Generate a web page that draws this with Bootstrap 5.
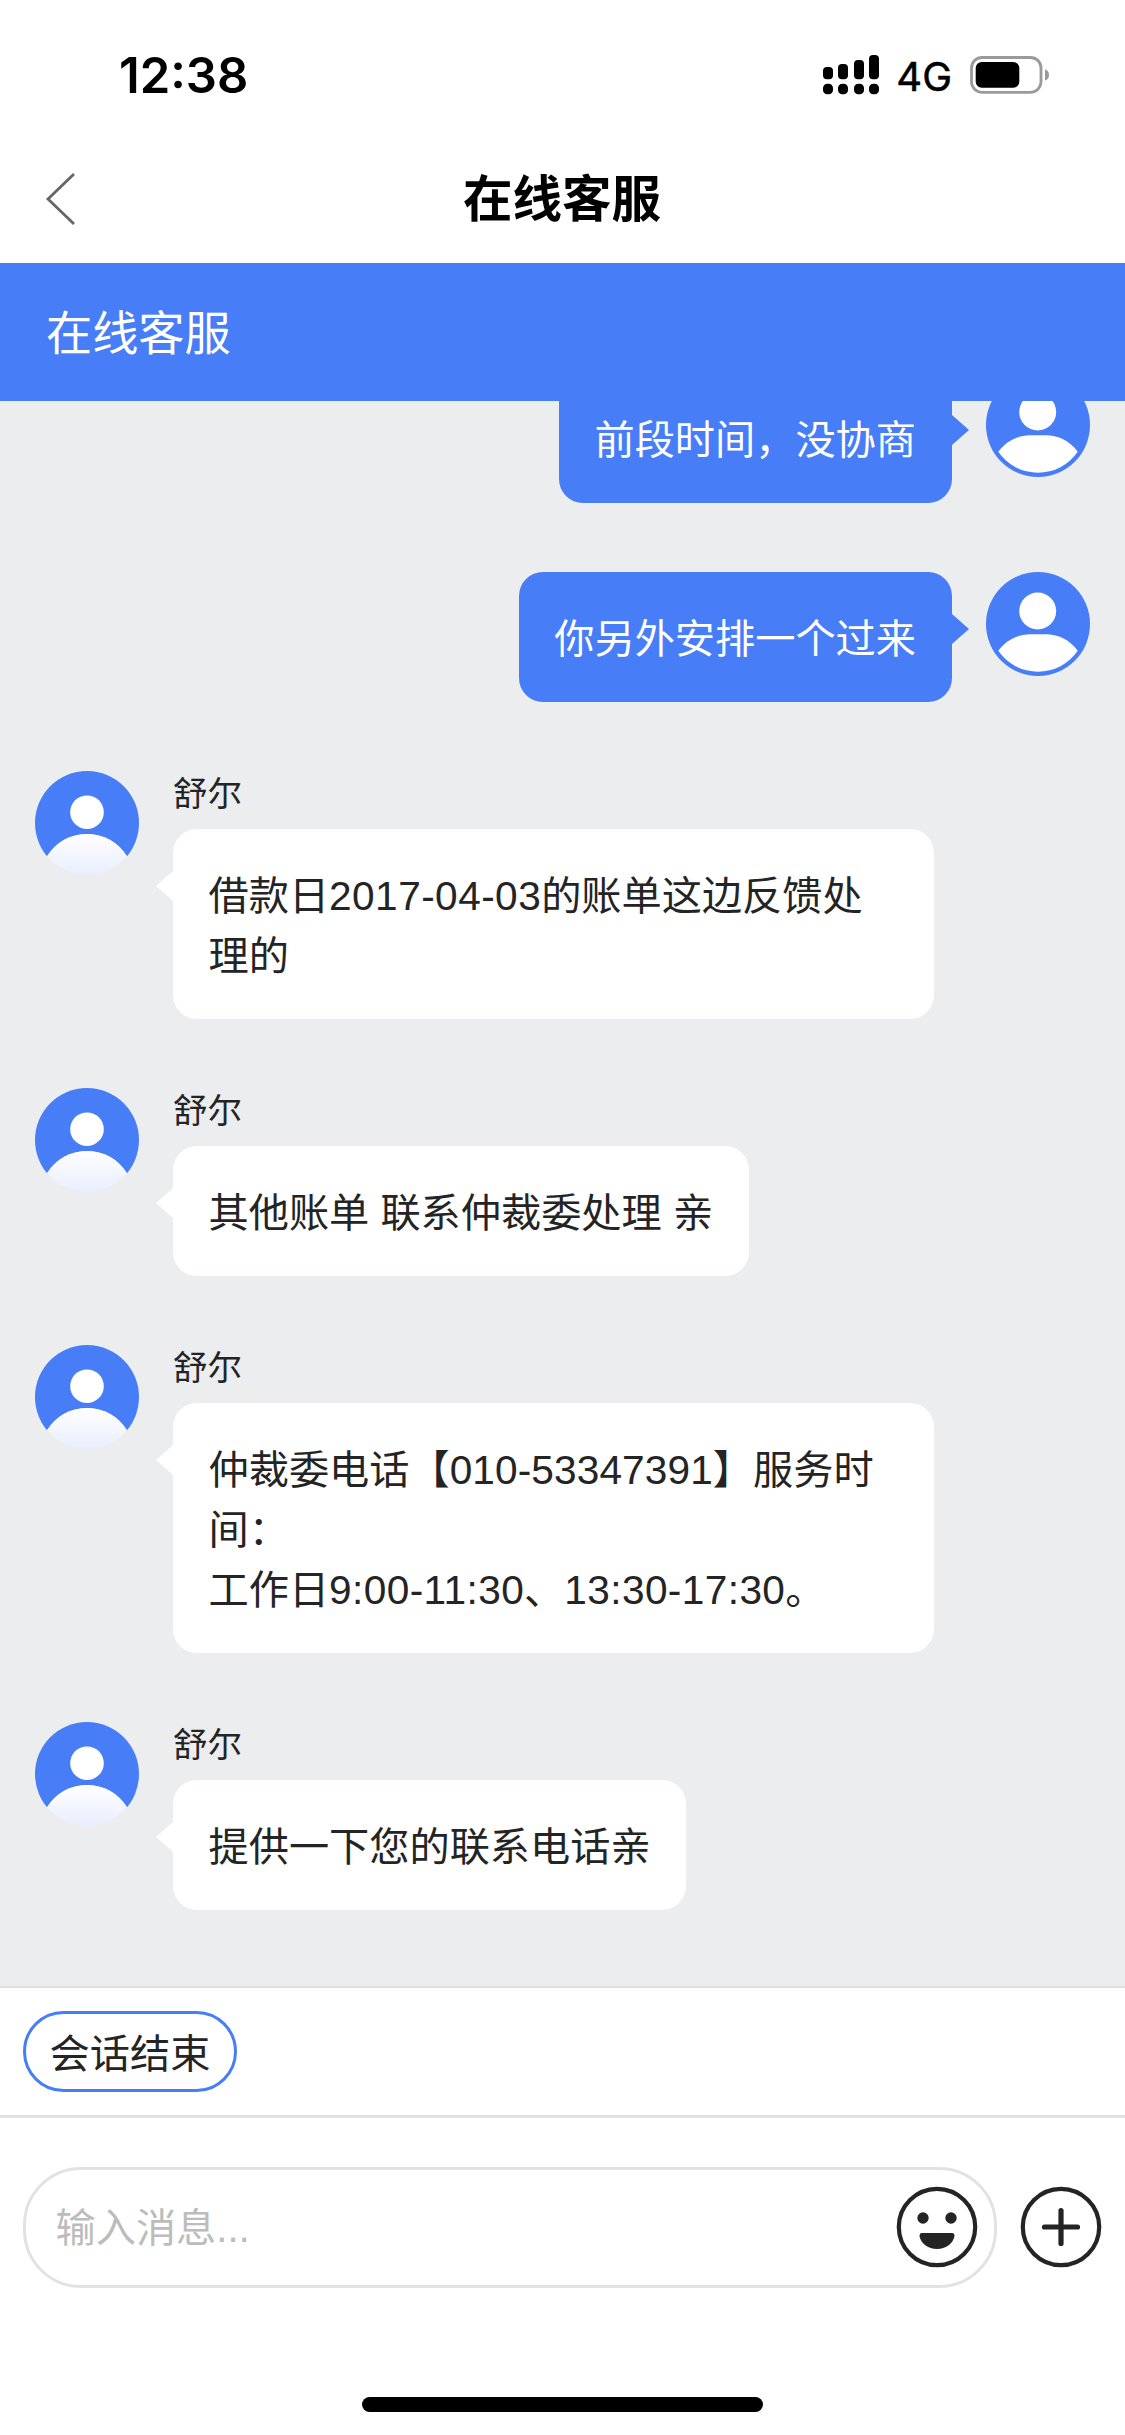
<!DOCTYPE html>
<html lang="zh-CN">
<head>
<meta charset="utf-8">
<meta name="viewport" content="width=device-width, initial-scale=1">
<title>在线客服</title>
<link href="https://cdn.jsdelivr.net/npm/bootstrap@5.3.0/dist/css/bootstrap.min.css" rel="stylesheet">
<style>
  :root { --brand: #477df6; --ink: #242424; --line: #e2e2e2; }
  body { font-family: "Liberation Sans", "Noto Sans CJK SC", sans-serif; color: var(--ink); }
  .screen { width: 1125px; height: 2435px; font-size: 40.2px; line-height: 60px; }
  svg { display: block; flex-shrink: 0; }

  .status-bar { height: 150px; padding: 0 75px 0 119px; font-family: Inter, sans-serif; color: #000; }
  .clock { font-size: 49px; font-weight: 600; padding-top: 2px; }
  .carrier { font-size: 40px; font-weight: 400; margin: 3px 18px 0 17.5px; -webkit-text-stroke: .5px #000; }
  .title-bar { height: 113px; padding: 0 45px 13px 44px; }
  .title-bar .page-title { font-size: 49.5px; font-weight: 700; color: #000; }
  .title-side { width: 32px; }
  .service-bar { height: 138px; padding: 3px 46px 0; background: var(--brand); font-size: 46.2px; }

  .chat { background: #ecedef; padding: 0 35px 76px 34.5px; gap: 69.1px; min-height: 0; }
  .msg { gap: 34.5px; }
  .sender { font-size: 34.6px; line-height: 47px; height: 58px; }
  .bubble { padding: 38px 35.5px 32px; border-radius: 24px; max-width: 761px; white-space: nowrap; }
  .bubble-wide { width: 761px; }
  .bubble-in { background: #fff; }
  .bubble-out { background: var(--brand); }
  .bubble::after { content: ""; position: absolute; top: 42px; border: 15px solid transparent; }
  .bubble-in::after { right: 100%; border-left-width: 0; border-right: 17px solid #fff; }
  .bubble-out::after { left: 100%; border-right-width: 0; border-left: 17px solid var(--brand); }
  .digits { font-size: 40.6px; line-height: 0; letter-spacing: .12px; }
  .digits-date { letter-spacing: .45px; }
  .digits-time { letter-spacing: .4px; }

  .quick-replies { height: 129px; border-top: 2px solid #dfdfdf; padding: 23px; }
  .quick-replies .btn { height: 81px; width: 214px; padding: 4px 0 0; border: 3px solid var(--brand); font-size: 40.2px; line-height: 74px; color: var(--ink); }
  .composer { border-top: 3px solid var(--line); padding: 49px 23px 0; gap: 23px; }
  .entry { height: 121px; width: 975px; border: 3px solid var(--line); border-radius: 58px; padding: 0 16px 0 29.5px; color: #bcbcbc; }
  .entry-hint { padding-top: 3px; }
  .entry svg { margin-bottom: 1px; }
  .add-btn { height: 120px; }
  .home-indicator { width: 401px; height: 15px; margin: 109px auto 23px; background: #000; }
</style>
</head>
<body class="m-0 bg-white">

<svg width="0" height="0" class="position-absolute" aria-hidden="true">
  <defs>
    <linearGradient id="shade" gradientUnits="userSpaceOnUse" x1="0" y1="62" x2="0" y2="104">
      <stop offset="0" stop-color="#fff"/><stop offset="1" stop-color="#e9eefe"/>
    </linearGradient>
    <clipPath id="disc"><circle cx="52" cy="52" r="52"/></clipPath>
    <symbol id="agent" viewBox="0 0 104 104">
      <path d="M12 85A52 52 0 0 0 92 85L52 62z" fill="url(#shade)"/>
      <g clip-path="url(#disc)">
        <path d="M0 0H104V85H91.8A47 47 0 0 0 12.2 85H0z" fill="#477df6"/>
        <circle cx="52" cy="41.2" r="16.8" fill="#fff"/>
        <path d="M12 85.2A47 47 0 0 1 92 85.2z" fill="url(#shade)"/>
      </g>
    </symbol>
    <symbol id="visitor" viewBox="0 0 104 104">
      <circle cx="52" cy="52" r="52" fill="#477df6"/>
      <circle cx="51.7" cy="39" r="18.5" fill="#fff"/>
      <path d="M12.3 78.7C21 67 33 62.3 44 62.3H60C71 62.3 83 67 91.7 78.7A48 48 0 0 1 12.3 78.7z" fill="#fff"/>
    </symbol>
  </defs>
</svg>

<div class="screen d-flex flex-column overflow-hidden">
  <header class="flex-shrink-0">
    <div class="status-bar d-flex align-items-center">
      <span class="clock me-auto">12:38</span>
      <svg width="56" height="40" viewBox="0 0 56 40">
        <rect x="0" y="12" width="10" height="12.3" rx="4"/><rect x="15" y="9" width="10" height="15.3" rx="4"/><rect x="31" y="5" width="10" height="19.3" rx="4"/><rect x="46" y="0" width="10" height="24.3" rx="4"/>
        <rect x="0" y="28.7" width="10" height="10.6" rx="4.3"/><rect x="15" y="28.7" width="10" height="10.6" rx="4.3"/><rect x="31" y="28.7" width="10" height="10.6" rx="4.3"/><rect x="46" y="28.7" width="10" height="10.6" rx="4.3"/>
      </svg>
      <span class="carrier">4G</span>
      <svg width="80" height="38" viewBox="0 0 80 38">
        <rect x="1.5" y="1.5" width="69.5" height="34.8" rx="10.5" fill="none" stroke="#9a9a9a" stroke-width="2.8"/>
        <rect x="5.7" y="6" width="43.6" height="25.8" rx="6"/>
        <path d="M75 13.2q4 1.4 4 5.7t-4 5.7z" fill="#9a9a9a"/>
      </svg>
    </div>
    <div class="title-bar d-flex align-items-center justify-content-between">
      <svg class="title-side" width="32" height="54" viewBox="0 0 32 54"><path d="M30 1 4 26 30 51" fill="none" stroke="#666" stroke-width="2.8"/></svg>
      <span class="page-title">在线客服</span>
      <span class="title-side"></span>
    </div>
    <div class="service-bar d-flex align-items-center text-white">在线客服</div>
  </header>

  <main class="chat flex-grow-1 d-flex flex-column justify-content-end overflow-hidden">
    <div class="msg d-flex justify-content-end align-items-start">
      <div class="bubble bubble-out position-relative text-white">前段时间，没协商</div>
      <svg width="104" height="104"><use href="#visitor"/></svg>
    </div>
    <div class="msg d-flex justify-content-end align-items-start">
      <div class="bubble bubble-out position-relative text-white">你另外安排一个过来</div>
      <svg width="104" height="104"><use href="#visitor"/></svg>
    </div>
    <div class="msg d-flex align-items-start">
      <svg width="104" height="104"><use href="#agent"/></svg>
      <div class="d-flex flex-column align-items-start">
        <div class="sender">舒尔</div>
        <div class="bubble bubble-in bubble-wide position-relative">借款日<span class="digits digits-date">2017-04-03</span>的账单这边反馈处<br>理的</div>
      </div>
    </div>
    <div class="msg d-flex align-items-start">
      <svg width="104" height="104"><use href="#agent"/></svg>
      <div class="d-flex flex-column align-items-start">
        <div class="sender">舒尔</div>
        <div class="bubble bubble-in position-relative">其他账单 联系仲裁委处理 亲</div>
      </div>
    </div>
    <div class="msg d-flex align-items-start">
      <svg width="104" height="104"><use href="#agent"/></svg>
      <div class="d-flex flex-column align-items-start">
        <div class="sender">舒尔</div>
        <div class="bubble bubble-in bubble-wide position-relative">仲裁委电话【<span class="digits">010-53347391</span>】服务时<br>间：<br>工作日<span class="digits digits-time">9:00-11:30</span>、<span class="digits digits-time">13:30-17:30</span>。</div>
      </div>
    </div>
    <div class="msg d-flex align-items-start">
      <svg width="104" height="104"><use href="#agent"/></svg>
      <div class="d-flex flex-column align-items-start">
        <div class="sender">舒尔</div>
        <div class="bubble bubble-in position-relative">提供一下您的联系电话亲</div>
      </div>
    </div>
  </main>

  <footer class="flex-shrink-0 bg-white">
    <div class="quick-replies"><button type="button" class="btn rounded-pill d-block">会话结束</button></div>
    <div class="composer d-flex align-items-start">
      <div class="entry d-flex align-items-center justify-content-between">
        <span class="entry-hint">输入消息...</span>
        <svg width="82" height="82" viewBox="-41 -41 82 82" fill="#242424">
          <circle r="38.2" fill="none" stroke="#242424" stroke-width="4.2"/>
          <circle cx="-14" cy="-9" r="5.7"/><circle cx="14" cy="-9" r="5.7"/>
          <path d="M-15 6H15Q17.5 6 17.5 9C16.5 16 9 22 0 22S-16.5 16-17.5 9Q-17.5 6-15 6z"/>
        </svg>
      </div>
      <div class="add-btn d-flex align-items-center">
        <svg width="82" height="82" viewBox="-41 -41 82 82" fill="none" stroke="#242424">
          <circle r="38.2" stroke-width="4.2"/>
          <path d="M-16.5 0H16.5M0-16.5V16.5" stroke-width="5.2" stroke-linecap="round"/>
        </svg>
      </div>
    </div>
    <div class="home-indicator rounded-pill"></div>
  </footer>
</div>
<script src="https://cdn.jsdelivr.net/npm/bootstrap@5.3.0/dist/js/bootstrap.bundle.min.js"></script>
</body>
</html>
